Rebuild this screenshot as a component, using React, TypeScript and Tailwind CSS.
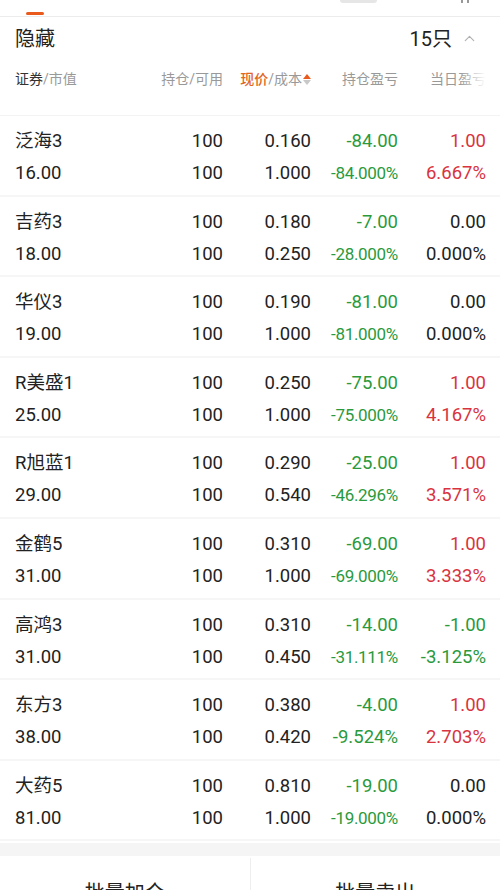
import { ChevronUp } from 'lucide-react';

type Row = {
  name: string;
  value: string;
  qty: string;
  avail: string;
  price: string;
  cost: string;
  pnl: string;
  pnlPct: string;
  day: string;
  dayPct: string;
};

const ROWS: Row[] = [
  { name: '泛海3', value: '16.00', qty: '100', avail: '100', price: '0.160', cost: '1.000', pnl: '-84.00', pnlPct: '-84.000%', day: '1.00', dayPct: '6.667%' },
  { name: '吉药3', value: '18.00', qty: '100', avail: '100', price: '0.180', cost: '0.250', pnl: '-7.00', pnlPct: '-28.000%', day: '0.00', dayPct: '0.000%' },
  { name: '华仪3', value: '19.00', qty: '100', avail: '100', price: '0.190', cost: '1.000', pnl: '-81.00', pnlPct: '-81.000%', day: '0.00', dayPct: '0.000%' },
  { name: 'R美盛1', value: '25.00', qty: '100', avail: '100', price: '0.250', cost: '1.000', pnl: '-75.00', pnlPct: '-75.000%', day: '1.00', dayPct: '4.167%' },
  { name: 'R旭蓝1', value: '29.00', qty: '100', avail: '100', price: '0.290', cost: '0.540', pnl: '-25.00', pnlPct: '-46.296%', day: '1.00', dayPct: '3.571%' },
  { name: '金鹤5', value: '31.00', qty: '100', avail: '100', price: '0.310', cost: '1.000', pnl: '-69.00', pnlPct: '-69.000%', day: '1.00', dayPct: '3.333%' },
  { name: '高鸿3', value: '31.00', qty: '100', avail: '100', price: '0.310', cost: '0.450', pnl: '-14.00', pnlPct: '-31.111%', day: '-1.00', dayPct: '-3.125%' },
  { name: '东方3', value: '38.00', qty: '100', avail: '100', price: '0.380', cost: '0.420', pnl: '-4.00', pnlPct: '-9.524%', day: '1.00', dayPct: '2.703%' },
  { name: '大药5', value: '81.00', qty: '100', avail: '100', price: '0.810', cost: '1.000', pnl: '-19.00', pnlPct: '-19.000%', day: '0.00', dayPct: '0.000%' },
];

function tone(v: string) {
  const n = parseFloat(v);
  if (n > 0) return 'text-[#d93340]';
  if (n < 0) return 'text-[#2a9a3c]';
  return 'text-[#222]';
}

// long strings get shrunk to fit the column, like the app does
function fit(v: string) {
  return v.length >= 8 ? 'text-[17px] tracking-[-0.3px]' : 'text-[18.5px]';
}

const GRID = 'grid grid-cols-[1fr_88px_88px_87px_88px] pl-[15px] pr-[14px]';

export default function App() {
  return (
    <div
      className="w-[500px] h-[890px] overflow-hidden bg-white text-[#222]"
      style={{ fontFamily: 'Roboto, "Noto Sans CJK SC", sans-serif' }}
    >
      {/* tab strip remains */}
      <div className="relative h-[17px] border-b border-[#ececec]">
        <div className="absolute left-[26px] bottom-[1px] w-[18px] h-[3px] rounded-full bg-[#ea5a1c]" />
        <div className="absolute left-[340px] top-0 w-[37px] h-[3px] rounded-b-full bg-[#e6e6e6]" />
        <div className="absolute left-[461px] top-0 w-[2px] h-[3px] bg-[#999]" />
        <div className="absolute left-[467px] top-0 w-[2px] h-[3px] bg-[#999]" />
      </div>

      {/* section header */}
      <div className="flex items-center h-[43px] pl-[15px] pr-[22px]">
        <span className="text-[20px]">隐藏</span>
        <span className="ml-auto text-[20px]">15只</span>
        <ChevronUp className="ml-[9px] w-[17px] h-[17px] text-[#b0b0b0]" strokeWidth={1.6} />
      </div>

      {/* column header */}
      <div className={`${GRID} items-center text-[14px] text-[#999] border-b border-[#f3f3f3] h-[56px] pb-[16px]`}>
        <div>
          <span className="text-[#333]">证券</span>/市值
        </div>
        <div className="text-right">持仓/可用</div>
        <div className="flex items-center justify-end">
          <span className="text-[#e2661f] font-medium">现价</span>/成本
          <span className="flex flex-col ml-[1px] gap-[1px]">
            <span className="w-0 h-0 border-l-[4px] border-r-[4px] border-b-[5px] border-l-transparent border-r-transparent border-b-[#ea5a1c]" />
            <span className="w-0 h-0 border-l-[4px] border-r-[4px] border-t-[5px] border-l-transparent border-r-transparent border-t-[#c8c8c8]" />
          </span>
        </div>
        <div className="text-right">持仓盈亏</div>
        <div className="relative text-right">
          当日盈亏
          <div className="absolute right-0 top-0 h-full w-[26px] bg-gradient-to-r from-transparent to-white" />
        </div>
      </div>

      {/* holdings */}
      {ROWS.map(r => (
        <div key={r.name} className={`${GRID} h-[80.6px] pt-[9px] border-b-2 border-[#f6f6f6] text-[18.5px]`}>
          <div className="flex flex-col">
            <span className="h-[32px] leading-[32px]">{r.name}</span>
            <span className="h-[32px] leading-[32px]">{r.value}</span>
          </div>
          <div className="flex flex-col items-end">
            <span className="h-[32px] leading-[32px]">{r.qty}</span>
            <span className="h-[32px] leading-[32px]">{r.avail}</span>
          </div>
          <div className="flex flex-col items-end">
            <span className="h-[32px] leading-[32px]">{r.price}</span>
            <span className="h-[32px] leading-[32px]">{r.cost}</span>
          </div>
          <div className="flex flex-col items-end">
            <span className={`h-[32px] leading-[32px] ${tone(r.pnl)}`}>{r.pnl}</span>
            <span className={`h-[32px] leading-[32px] ${tone(r.pnlPct)} ${fit(r.pnlPct)}`}>{r.pnlPct}</span>
          </div>
          <div className="flex flex-col items-end">
            <span className={`h-[32px] leading-[32px] ${tone(r.day)}`}>{r.day}</span>
            <span className={`h-[32px] leading-[32px] ${tone(r.dayPct)} ${fit(r.dayPct)}`}>{r.dayPct}</span>
          </div>
        </div>
      ))}

      <div className="h-[2px]" />
      <div className="h-[13px] bg-[#f5f5f5]" />

      {/* batch actions */}
      <div className="flex h-[60px] text-[20px] text-[#222]">
        <button className="flex-1 pt-[13px] leading-[28px] text-center">批量加仓</button>
        <div className="w-px mt-[2px] bg-[#eeeeee]" />
        <button className="flex-1 pt-[13px] leading-[28px] text-center">批量卖出</button>
      </div>
    </div>
  );
}
